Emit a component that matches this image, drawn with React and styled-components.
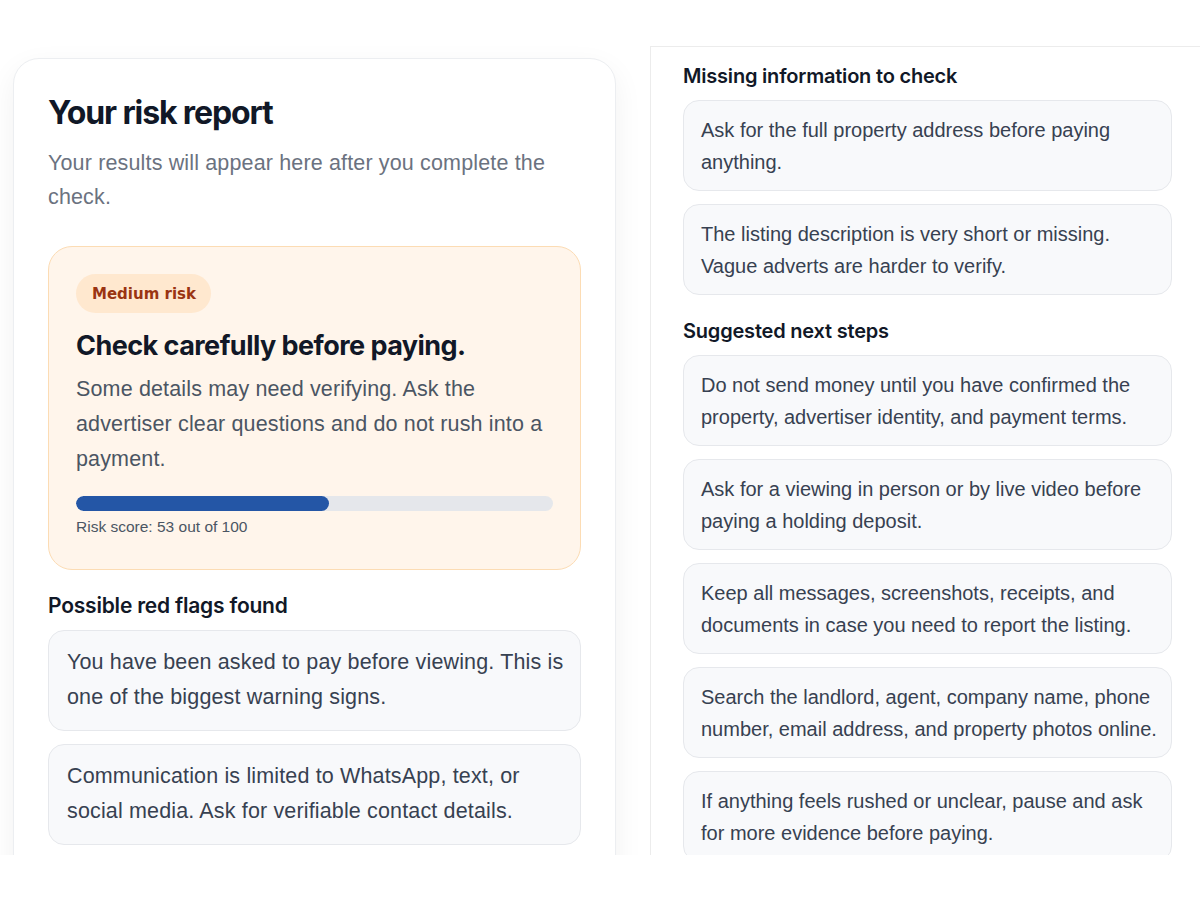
import styled, { createGlobalStyle } from "styled-components";

const GlobalStyle = createGlobalStyle`
  html, body {
    margin: 0;
    padding: 0;
    background: #ffffff;
  }
  * {
    box-sizing: border-box;
  }
`;

const missingInfo = [
  "Ask for the full property address before paying anything.",
  "The listing description is very short or missing. Vague adverts are harder to verify.",
];

const nextSteps = [
  "Do not send money until you have confirmed the property, advertiser identity, and payment terms.",
  "Ask for a viewing in person or by live video before paying a holding deposit.",
  "Keep all messages, screenshots, receipts, and documents in case you need to report the listing.",
  "Search the landlord, agent, company name, phone number, email address, and property photos online.",
  "If anything feels rushed or unclear, pause and ask for more evidence before paying.",
];

const redFlags = [
  "You have been asked to pay before viewing. This is one of the biggest warning signs.",
  "Communication is limited to WhatsApp, text, or social media. Ask for verifiable contact details.",
];

export default function App() {
  const score = 53;
  return (
    <>
      <GlobalStyle />
      <Page>
        <LeftColumn>
          <ReportCard>
            <Title>Your risk report</Title>
            <Intro>Your results will appear here after you complete the check.</Intro>

            <RiskBox>
              <Badge>Medium risk</Badge>
              <RiskHeading>Check carefully before paying.</RiskHeading>
              <RiskText>
                Some details may need verifying. Ask the advertiser clear questions and do not
                rush into a payment.
              </RiskText>
              <Track>
                <Fill style={{ width: `${score}%` }} />
              </Track>
              <Score>Risk score: {score} out of 100</Score>
            </RiskBox>

            <SectionTitle $big>Possible red flags found</SectionTitle>
            <List>
              {redFlags.map((text) => (
                <Item key={text} $big>
                  {text}
                </Item>
              ))}
            </List>
          </ReportCard>
        </LeftColumn>

        <RightPanel>
          <SectionTitle>Missing information to check</SectionTitle>
          <List>
            {missingInfo.map((text) => (
              <Item key={text}>{text}</Item>
            ))}
          </List>

          <SectionTitle $spaced>Suggested next steps</SectionTitle>
          <List>
            {nextSteps.map((text) => (
              <Item key={text}>{text}</Item>
            ))}
          </List>
        </RightPanel>
      </Page>
    </>
  );
}

const Page = styled.div`
  display: flex;
  height: 855px;
  overflow: hidden;
  background: #ffffff;
`;

const LeftColumn = styled.div`
  width: 650px;
  flex-shrink: 0;
  padding: 58px 0 0 13px;
`;

const ReportCard = styled.section`
  width: 603px;
  min-height: 900px;
  background: #ffffff;
  border: 1px solid #eceef1;
  border-radius: 26px;
  box-shadow: 0 10px 30px rgba(15, 23, 42, 0.06);
  padding: 35px 34px 0 34px;
`;

const Title = styled.h1`
  margin: 0;
  font-family: Inter, "Noto Sans", sans-serif;
  font-size: 32px;
  line-height: 38px;
  font-weight: 700;
  letter-spacing: -0.035em;
  color: #111827;
`;

const Intro = styled.p`
  margin: 14px 0 0;
  font-family: "Liberation Sans", Arial, sans-serif;
  font-size: 21.5px;
  line-height: 34px;
  letter-spacing: 0.15px;
  color: #6b7280;
`;

const RiskBox = styled.div`
  margin-top: 32px;
  background: #fff5eb;
  border: 1px solid #fcdcb4;
  border-radius: 24px;
  padding: 27px 27px 32px;
`;

const Badge = styled.span`
  display: inline-flex;
  align-items: center;
  height: 39px;
  padding: 0 15px 0 16px;
  border-radius: 999px;
  background: #ffe8cf;
  color: #9a3412;
  font-family: "DejaVu Sans", Verdana, sans-serif;
  font-weight: 700;
  font-size: 15px;
`;

const RiskHeading = styled.h2`
  margin: 17px 0 0;
  font-family: Inter, "Noto Sans", sans-serif;
  font-size: 27px;
  line-height: 32px;
  font-weight: 700;
  letter-spacing: -0.02em;
  color: #111827;
`;

const RiskText = styled.p`
  margin: 10px 0 0;
  font-family: "Liberation Sans", Arial, sans-serif;
  font-size: 21.5px;
  line-height: 35px;
  letter-spacing: 0.15px;
  color: #4b5563;
`;

const Track = styled.div`
  margin-top: 19px;
  height: 15px;
  border-radius: 999px;
  background: #e5e7eb;
  overflow: hidden;
`;

const Fill = styled.div`
  height: 100%;
  border-radius: 999px;
  background: #2456a6;
`;

const Score = styled.div`
  margin-top: 6px;
  font-family: "Liberation Sans", Arial, sans-serif;
  font-size: 15.5px;
  line-height: 20px;
  color: #4b5563;
`;

const SectionTitle = styled.h3`
  margin: ${(p) => (p.$spaced ? "24px" : p.$big ? "24px" : "0")} 0 12px;
  font-family: Inter, "Noto Sans", sans-serif;
  font-size: ${(p) => (p.$big ? "21px" : "20px")};
  line-height: 24px;
  font-weight: 600;
  letter-spacing: -0.01em;
  color: #111827;
`;

const List = styled.div`
  display: flex;
  flex-direction: column;
  gap: 13px;
`;

const Item = styled.div`
  background: #f8f9fb;
  border: 1px solid #e6e8ec;
  border-radius: 16px;
  font-family: "Liberation Sans", Arial, sans-serif;
  color: #374151;
  font-size: ${(p) => (p.$big ? "21.5px" : "20px")};
  line-height: ${(p) => (p.$big ? "35px" : "32px")};
  letter-spacing: ${(p) => (p.$big ? "0.15px" : "0")};
  padding: ${(p) => (p.$big ? "14px 12px 15px 18px" : "13px 12px 12px 17px")};
`;

const RightPanel = styled.section`
  flex: 1;
  margin-top: 46px;
  border-top: 1px solid #ececec;
  border-left: 1px solid #ececec;
  padding: 17px 28px 0 32px;
`;
